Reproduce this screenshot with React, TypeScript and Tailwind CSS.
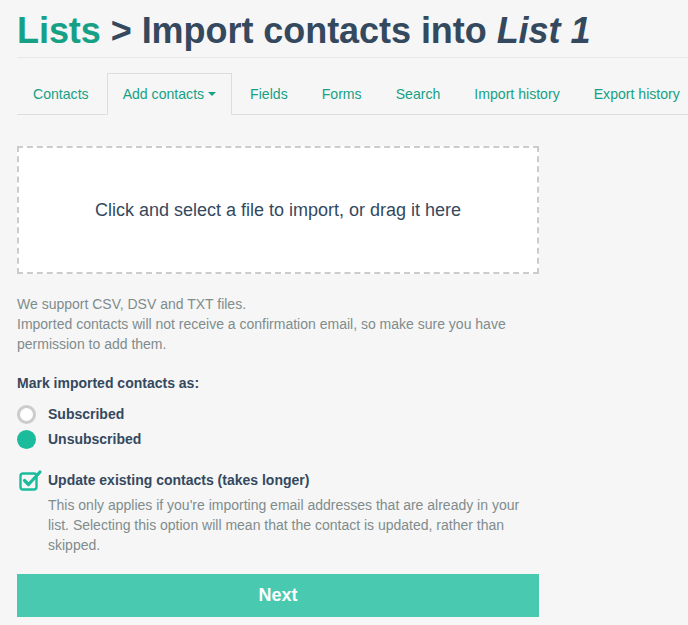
import React from "react";

const tabs = ["Contacts", "Add contacts", "Fields", "Forms", "Search", "Import history", "Export history"];

const App = () => {
  return (
    <div className="min-h-[625px] w-full bg-[#f6f6f6] font-['Liberation_Sans',Arial,sans-serif] overflow-hidden">
      <div className="pl-[17px]">
        <h1 className="pt-[11px] pb-[6px] text-[36px] font-bold leading-[40px] text-[#34495e] tracking-[-0.05px] whitespace-nowrap">
          <span className="text-[#16a085]">Lists</span> &gt; Import contacts into <em>List 1</em>
        </h1>
        <div className="border-t border-[#e8e8e8]" />

        <ul className="mt-[15px] flex border-b border-[#dddddd] text-[14.1px] leading-[20px] whitespace-nowrap">
          {tabs.map((t, i) => (
            <li key={t} className="mr-[2px] -mb-px">
              <span
                className={
                  i === 1
                    ? "flex items-center gap-[4px] border border-[#dddddd] border-b-transparent bg-[#f6f6f6] px-[15px] py-[10px] text-[#16a085]"
                    : "flex items-center border border-transparent px-[15px] py-[10px] text-[#16a085]"
                }
              >
                {t}
                {i === 1 && (
                  <svg width="8" height="4" viewBox="0 0 8 4">
                    <path d="M0 0h8L4 4z" fill="#16a085" />
                  </svg>
                )}
              </span>
            </li>
          ))}
        </ul>

        <div className="w-[522px]">
          <div className="mt-[31px] flex h-[128px] items-center justify-center border-2 border-dashed border-[#cccccc] bg-white text-[18px] text-[#34495e]">
            Click and select a file to import, or drag it here
          </div>

          <div className="mt-[20px] text-[14px] leading-[20px] text-[#7f8c8d]">
            <p>We support CSV, DSV and TXT files.</p>
            <p>Imported contacts will not receive a confirmation email, so make sure you have permission to add them.</p>
          </div>

          <p className="mt-[19px] text-[14px] font-bold leading-[20px] text-[#34495e]">Mark imported contacts as:</p>

          <div className="mt-[11px] flex flex-col gap-[5px] text-[14px] font-bold leading-[20px] text-[#34495e]">
            <label className="flex items-center gap-[12px]">
              <span className="h-[19px] w-[19px] rounded-full border-[3px] border-[#cccccc] bg-white" />
              Subscribed
            </label>
            <label className="flex items-center gap-[12px]">
              <span className="h-[19px] w-[19px] rounded-full bg-[#1abc9c]" />
              Unsubscribed
            </label>
          </div>

          <div className="mt-[21px] flex items-start">
            <svg width="24" height="22" viewBox="0 0 24 22" className="ml-[2px] mt-[-1px] shrink-0">
              <rect x="1.5" y="4.5" width="16" height="16" rx="2.5" fill="none" stroke="#1abc9c" strokeWidth="2.4" />
              <path d="M5.5 11.5l4 4L21 3" fill="none" stroke="#1abc9c" strokeWidth="3.2" strokeLinecap="round" strokeLinejoin="round" />
            </svg>
            <div className="ml-[5px] text-[14px] leading-[20px]">
              <p className="font-bold text-[#34495e]">Update existing contacts (takes longer)</p>
              <p className="mt-[5px] text-[#7f8c8d]">
                This only applies if you're importing email addresses that are already in your list. Selecting this option will mean that the contact is updated, rather than skipped.
              </p>
            </div>
          </div>

          <button className="mt-[19px] flex h-[43px] w-full items-center justify-center bg-[#48c9b0] text-[18px] font-bold text-white">
            Next
          </button>
        </div>
      </div>
    </div>
  );
};

export default App;
